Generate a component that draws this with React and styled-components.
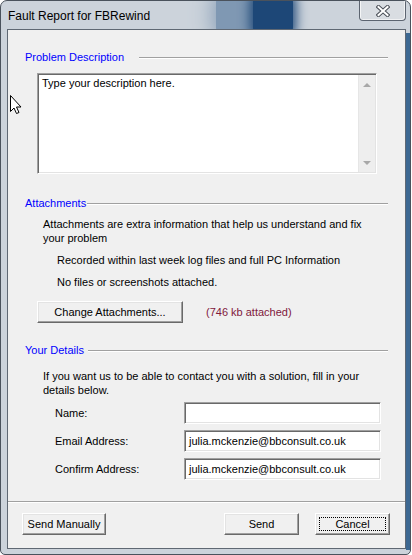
import React from "react";
import styled, { createGlobalStyle } from "styled-components";

const GlobalStyle = createGlobalStyle`
  html, body {
    margin: 0;
    padding: 0;
    background: #ffffff;
  }
  body {
    font-family: "Liberation Sans", Arial, sans-serif;
    font-size: 11px;
    color: #000;
  }
`;

const Window = styled.div`
  position: relative;
  width: 411px;
  height: 555px;
  box-sizing: border-box;
  border: 1px solid #4a525c;
  border-radius: 7px 7px 5px 5px;
  padding: 0 4px 5px 6px;
  display: flex;
  flex-direction: column;
  overflow: hidden;
  background-color: #ccd3db;
`;

const TitleBar = styled.div`
  position: relative;
  height: 28px;
  margin: 0 -4px 0 -6px;
  padding: 1px 0 0 7px;
  display: flex;
  align-items: center;
  box-sizing: border-box;
  font-size: 12px;
  color: #000;
  overflow: hidden;
`;

const Glow = styled.div`
  position: absolute;
  left: ${(p) => p.$left}px;
  top: -10px;
  width: ${(p) => p.$w}px;
  height: 48px;
  background: ${(p) => p.$color};
  border-radius: 12px;
  box-shadow: 0 0 ${(p) => p.$blur}px ${(p) => p.$spread}px ${(p) => p.$color};
`;

const TitleText = styled.span`
  position: relative;
`;

const CloseButton = styled.div`
  position: absolute;
  top: 0;
  right: 4px;
  width: 47px;
  height: 20px;
  box-sizing: border-box;
  border: 1px solid #5c6470;
  border-top: none;
  border-radius: 0 0 4px 4px;
  background: #d9dde2;
  box-shadow: inset 1px 0 rgba(255, 255, 255, 0.7), inset -1px -1px rgba(255, 255, 255, 0.6);
  display: flex;
  align-items: center;
  justify-content: center;
`;

const RightFrame = styled.div`
  position: absolute;
  right: 0;
  top: 32px;
  bottom: 4px;
  width: 4px;
  background: #3d6892;
`;

const Client = styled.div`
  position: relative;
  flex: 1;
  border: 1px solid #5f6873;
  background: #f0f0f0;
  display: flex;
  flex-direction: column;
`;

const Content = styled.div`
  padding: 21px 17px 0;
  display: flex;
  flex-direction: column;
`;

const GroupHeader = styled.div`
  display: flex;
  align-items: center;
  height: 13px;
  margin-top: ${(p) => p.$top || 0}px;
  color: #0000ff;
  line-height: 13px;
`;

const GroupLine = styled.div`
  flex: 1;
  height: 1px;
  margin-left: ${(p) => p.$gap}px;
  background: #a0a0a0;
  box-shadow: 0 1px #ffffff;
`;

const Memo = styled.div`
  position: relative;
  margin: 9px 0 0 12px;
  width: 340px;
  height: 101px;
  box-sizing: border-box;
  border-top: 1px solid #a0a0a0;
  border-left: 1px solid #a0a0a0;
  border-right: 1px solid #ffffff;
  border-bottom: 1px solid #ffffff;
  box-shadow: inset 1px 1px #696969, inset -1px -1px #e3e3e3;
  background: #fff;
  display: flex;
`;

const MemoText = styled.div`
  flex: 1;
  padding: 3px 0 0 4px;
  line-height: 13px;
`;

const ScrollBar = styled.div`
  width: 17px;
  margin: 1px 1px 1px 0;
  background: #eeeeee;
  box-shadow: inset 1px 0 #e6e6e6;
  display: flex;
  flex-direction: column;
  justify-content: space-between;
  align-items: center;
  padding: 8px 0 7px;
  box-sizing: border-box;
`;

const Arrow = styled.div`
  width: 0;
  height: 0;
  border-left: 4px solid transparent;
  border-right: 4px solid transparent;
  ${(p) => (p.$up ? "border-bottom: 4px solid #a8a8a8;" : "border-top: 4px solid #a8a8a8;")}
`;

const Para = styled.div`
  margin: ${(p) => p.$top}px 0 0 18px;
  line-height: 14px;
`;

const InfoLine = styled.div`
  margin: 8px 0 0 32px;
  line-height: 14px;
`;

const AttachRow = styled.div`
  display: flex;
  align-items: center;
  margin: 12px 0 0 12px;
  gap: 23px;
`;

const Button = styled.button`
  width: ${(p) => p.$w}px;
  height: 22px;
  box-sizing: border-box;
  margin: 0;
  padding: 0 0 1px;
  font-family: "Liberation Sans", Arial, sans-serif;
  font-size: 11px;
  color: #000;
  background: #f0f0f0;
  border-top: 1px solid #ffffff;
  border-left: 1px solid #ffffff;
  border-right: 1px solid #696969;
  border-bottom: 1px solid #696969;
  box-shadow: inset -1px -1px #a0a0a0, inset 1px 1px #e3e3e3;
  border-radius: 0;
  position: relative;
`;

const FocusRect = styled.span`
  position: absolute;
  inset: 3px;
  border: 1px dotted #000;
`;

const Size = styled.span`
  color: #80183c;
`;

const Fields = styled.div`
  display: grid;
  grid-template-columns: 129px 197px;
  row-gap: 6px;
  margin: 5px 0 0 30px;
  align-items: center;
`;

const Label = styled.div`
  line-height: 14px;
`;

const Edit = styled.div`
  height: 22px;
  box-sizing: border-box;
  border-top: 1px solid #a0a0a0;
  border-left: 1px solid #a0a0a0;
  border-right: 1px solid #ffffff;
  border-bottom: 1px solid #ffffff;
  box-shadow: inset 1px 1px #696969, inset -1px -1px #e3e3e3;
  background: #fff;
  padding: 0 0 0 4px;
  line-height: 20px;
`;

const Separator = styled.div`
  height: 1px;
  margin-top: 21px;
  background: #a0a0a0;
  border-bottom: 1px solid #ffffff;
`;

const Footer = styled.div`
  display: flex;
  justify-content: space-between;
  align-items: center;
  padding: 10px 15px 0 14px;
`;

const RightButtons = styled.div`
  display: flex;
  gap: 16px;
`;

const Cursor = styled.svg`
  position: absolute;
  left: 8px;
  top: 93px;
`;

export default function App() {
  return (
    <Window>
      <GlobalStyle />
      <TitleBar>
        <Glow $left={215} $w={40} $color="#7f98b3" $blur={22} $spread={2} />
        <Glow $left={252} $w={40} $color="#1d4777" $blur={12} $spread={3} />
        <TitleText>Fault Report for FBRewind</TitleText>
        <CloseButton>
          <svg width="14" height="12" viewBox="0 0 14 12">
            <path d="M2.5 2 L11.5 10 M11.5 2 L2.5 10" stroke="#4a4f57" strokeWidth="4" strokeLinecap="square" />
            <path d="M2.5 2 L11.5 10 M11.5 2 L2.5 10" stroke="#ffffff" strokeWidth="2" strokeLinecap="square" />
          </svg>
        </CloseButton>
      </TitleBar>
      <Client>
        <Content>
          <GroupHeader>
            Problem Description
            <GroupLine $gap={15} />
          </GroupHeader>
          <Memo>
            <MemoText>Type your description here.</MemoText>
            <ScrollBar>
              <Arrow $up />
              <Arrow />
            </ScrollBar>
          </Memo>

          <GroupHeader $top={23}>
            Attachments
            <GroupLine $gap={1} />
          </GroupHeader>
          <Para $top={7}>
            Attachments are extra information that help us understand and fix
            <br />
            your problem
          </Para>
          <InfoLine>Recorded within last week log files and full PC Information</InfoLine>
          <InfoLine>No files or screenshots attached.</InfoLine>
          <AttachRow>
            <Button $w={146}>Change Attachments...</Button>
            <Size>(746 kb attached)</Size>
          </AttachRow>

          <GroupHeader $top={21}>
            Your Details
            <GroupLine $gap={4} />
          </GroupHeader>
          <Para $top={12}>
            If you want us to be able to contact you with a solution, fill in your
            <br />
            details below.
          </Para>
          <Fields>
            <Label>Name:</Label>
            <Edit />
            <Label>Email Address:</Label>
            <Edit>julia.mckenzie@bbconsult.co.uk</Edit>
            <Label>Confirm Address:</Label>
            <Edit>julia.mckenzie@bbconsult.co.uk</Edit>
          </Fields>
        </Content>
        <Separator />
        <Footer>
          <Button $w={84}>Send Manually</Button>
          <RightButtons>
            <Button $w={75}>Send</Button>
            <Button $w={75}>
              Cancel
              <FocusRect />
            </Button>
          </RightButtons>
        </Footer>
      </Client>
      <RightFrame />
      <Cursor width="13" height="21" viewBox="0 0 13 21">
        <path
          d="M1.5 1.5 L1.5 17.5 L5 14 L7.5 19.5 L10 18.5 L7.5 13 L12 13 Z"
          fill="#ffffff"
          stroke="#000000"
          strokeWidth="1"
          strokeLinejoin="miter"
        />
      </Cursor>
    </Window>
  );
}
